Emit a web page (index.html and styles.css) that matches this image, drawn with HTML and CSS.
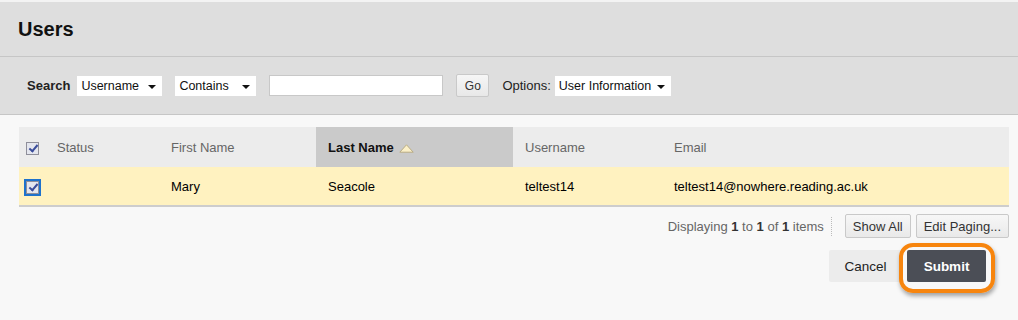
FILE: index.html
```html
<!DOCTYPE html>
<html lang="en">
<head>
  <meta charset="UTF-8" />
  <title>Users</title>
  <link rel="stylesheet" href="styles.css">
</head>
<body>

<!-- Page title -->
<div class="page-header">
  <h1>Users</h1>
</div>

<!-- Search bar -->
<div class="search-bar">
  <span class="search-label">Search</span>
  <div class="select sel-field">Username<span class="caret"></span></div>
  <div class="select sel-op">Contains<span class="caret"></span></div>
  <input type="text" class="search-input" />
  <button class="btn-go">Go</button>
  <span class="options-label">Options:</span>
  <div class="select sel-options">User Information<span class="caret"></span></div>
</div>

<!-- Users list -->
<div class="content">
  <table class="users">
    <colgroup>
      <col style="width: 26px">
      <col style="width: 114px">
      <col style="width: 157px">
      <col style="width: 197px">
      <col style="width: 149px">
      <col>
    </colgroup>
    <thead>
      <tr>
        <th class="cb-cell"><span class="checkbox"></span></th>
        <th>Status</th>
        <th>First Name</th>
        <th class="sorted">Last Name
          <svg class="sort-arrow" width="15" height="9" viewBox="0 0 15 9">
            <polygon points="7.5,0.8 14.2,8.2 0.8,8.2" fill="#fbf0c8" stroke="#b9ac84" stroke-width="1"/>
          </svg>
        </th>
        <th>Username</th>
        <th>Email</th>
      </tr>
    </thead>
    <tbody>
      <tr class="selected">
        <td class="cb-cell"><span class="checkbox focused"></span></td>
        <td></td>
        <td>Mary</td>
        <td>Seacole</td>
        <td>teltest14</td>
        <td>teltest14@nowhere.reading.ac.uk</td>
      </tr>
    </tbody>
  </table>

  <div class="paging">
    <span class="paging-info">Displaying <b>1</b> to <b>1</b> of <b>1</b> items</span>
    <span class="sep"></span>
    <button class="btn-small">Show All</button>
    <button class="btn-small">Edit Paging...</button>
  </div>

  <div class="actions">
    <button class="btn-cancel">Cancel</button>
    <span class="submit-wrap">
      <button class="btn-submit">Submit</button>
      <span class="highlight"></span>
    </span>
  </div>
</div>

</body>
</html>
```

FILE: styles.css
```css
body {
  margin: 0;
  font-family: "Liberation Sans", Arial, sans-serif;
  background: #f8f8f8;
  color: #000;
}
.page-header {
  border-top: 2px solid #f3f3f3;
  background: #dedede;
  height: 54px;
  display: flex;
  align-items: center;
  padding-left: 18px;
  border-bottom: 1px solid #c6c6c6;
}
h1 {
  margin: 0;
  font-size: 20px;
  font-weight: bold;
  color: #111;
}
.search-bar {
  background: #dedede;
  height: 57px;
  display: flex;
  align-items: center;
  padding-left: 27px;
  border-bottom: 1px solid #c6c6c6;
  font-size: 13px;
}
.search-label {
  font-weight: bold;
  color: #222;
  margin-right: 7px;
}
.select {
  position: relative;
  flex-shrink: 0;
  background: #fff;
  height: 20px;
  line-height: 20px;
  padding-left: 4px;
  box-sizing: border-box;
  font-size: 12.5px;
  color: #111;
}
.caret {
  position: absolute;
  right: 6px;
  top: 9px;
  width: 0;
  height: 0;
  border-left: 4px solid transparent;
  border-right: 4px solid transparent;
  border-top: 4px solid #111;
}
.sel-field {
  width: 85px;
  margin-right: 13px;
}
.sel-op {
  width: 81px;
  margin-right: 13px;
}
.sel-options {
  width: 116px;
}
.search-input {
  width: 174px;
  height: 21px;
  box-sizing: border-box;
  border: 1px solid #c8c8c8;
  background: #fff;
  margin: 0 13px 0 0;
}
.btn-go {
  width: 33px;
  height: 23px;
  padding: 0;
  border: 1px solid #c9c9c9;
  border-radius: 2px;
  background: linear-gradient(#f6f6f6, #e8e8e8);
  font-family: inherit;
  font-size: 12px;
  color: #333;
  margin-right: 13px;
}
.options-label {
  color: #222;
  margin-right: 4px;
}
.content {
  padding: 12px 9px 40px 19px;
}
.users {
  width: 990px;
  border-collapse: collapse;
  table-layout: fixed;
  font-size: 13px;
}
.users th {
  background: #ececec;
  height: 40px;
  text-align: left;
  font-weight: normal;
  color: #666;
  padding: 0 12px;
}
.users th.sorted {
  background: #cacaca;
  color: #111;
  font-weight: bold;
}
.sort-arrow {
  margin-left: 2px;
  vertical-align: -1px;
}
.users td {
  height: 38px;
  padding: 0 12px;
  background: #fff2c0;
  border-bottom: 2px solid #cdcdcd;
  color: #000;
}
.users .cb-cell {
  padding: 0 0 0 7px;
}
.checkbox {
  display: inline-block;
  width: 13px;
  height: 13px;
  box-sizing: border-box;
  border: 1px solid #8f8f9a;
  background: #e4e6ee;
  position: relative;
  vertical-align: middle;
}
.checkbox::after {
  content: "";
  position: absolute;
  left: 4px;
  top: 0px;
  width: 3px;
  height: 7px;
  border-right: 2px solid #3a4c9a;
  border-bottom: 2px solid #3a4c9a;
  transform: rotate(40deg);
}
.checkbox.focused {
  outline: 2px solid #1e72cc;
  outline-offset: 0;
}
.paging {
  display: flex;
  justify-content: flex-end;
  align-items: center;
  margin-top: 7px;
  font-size: 13px;
}
.paging-info {
  color: #666;
}
.paging-info b {
  color: #333;
}
.sep {
  width: 0;
  height: 19px;
  border-left: 1px dotted #bbb;
  margin: 0 13px 0 7px;
}
.btn-small {
  height: 24px;
  padding: 0 7px;
  border: 1px solid #c9c9c9;
  border-radius: 2px;
  background: linear-gradient(#f7f7f7, #e9e9e9);
  font-family: inherit;
  font-size: 13px;
  color: #333;
  margin-left: 5px;
}
.btn-small:first-of-type {
  margin-left: 0;
}
.actions {
  display: flex;
  justify-content: flex-end;
  margin-top: 12px;
  padding-right: 23px;
}
.btn-cancel {
  width: 73px;
  height: 32px;
  border: none;
  border-radius: 2px;
  background: #ececec;
  font-family: inherit;
  font-size: 13.5px;
  color: #222;
  margin-right: 5px;
}
.submit-wrap {
  position: relative;
  display: flex;
}
.btn-submit {
  width: 79px;
  height: 32px;
  border: none;
  border-radius: 2px;
  background: #4b4e56;
  font-family: inherit;
  font-size: 13.5px;
  font-weight: bold;
  color: #fff;
}
.highlight {
  position: absolute;
  left: -8px;
  top: -7px;
  right: -9px;
  bottom: -11px;
  border: 4px solid #f7850e;
  border-radius: 14px;
  box-shadow: 1px 3px 4px rgba(0,0,0,0.35);
  pointer-events: none;
}
```
